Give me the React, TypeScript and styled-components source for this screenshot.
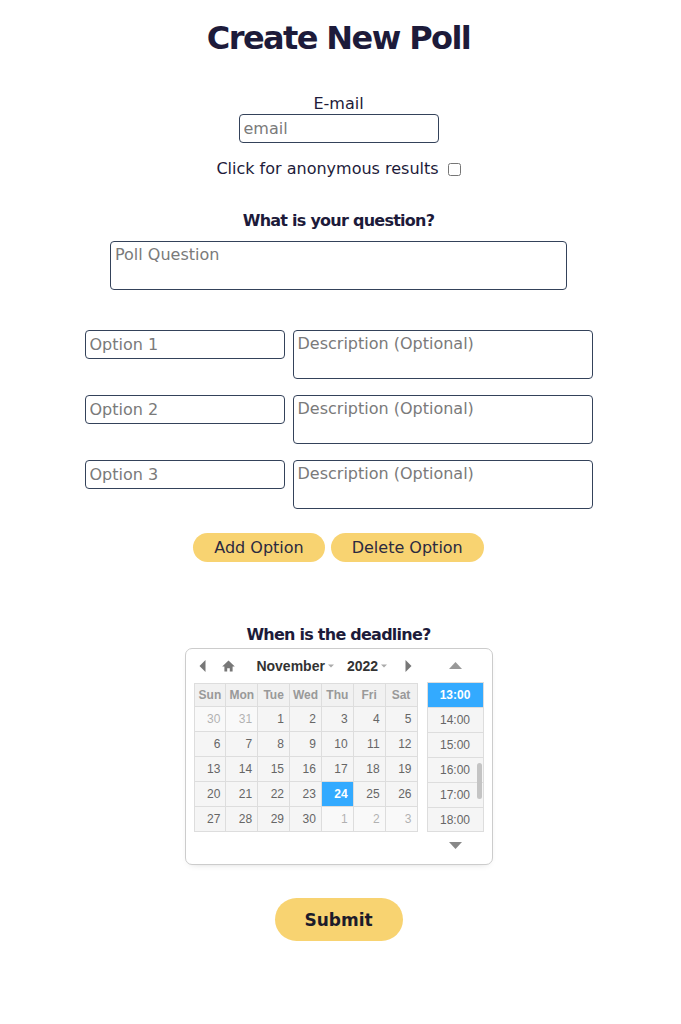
import React from "react";
import styled, { createGlobalStyle } from "styled-components";

const Global = createGlobalStyle`
  body {
    margin: 0;
    background: #ffffff;
    font-family: "DejaVu Sans", "Open Sans", sans-serif;
    color: #1d1b3a;
  }
  * { box-sizing: border-box; }
`;

const Page = styled.main`
  display: flex;
  flex-direction: column;
  align-items: center;
  padding: 18px 4px 60px 0;
`;

const Title = styled.h1`
  margin: 0;
  font-size: 32px;
  line-height: 40px;
  font-weight: 700;
  letter-spacing: -1.6px;
  color: #1d1b3a;
`;

const FieldLabel = styled.label<{ $top: number }>`
  margin-top: ${(p) => p.$top}px;
  font-size: 16px;
  line-height: 20px;
  color: #1d1b3a;
`;

const Heading = styled.h2<{ $top: number }>`
  margin: ${(p) => p.$top}px 0 0;
  font-size: 16px;
  line-height: 20px;
  font-weight: 700;
  letter-spacing: -0.75px;
  color: #1d1b3a;
`;

const fieldBase = `
  font-family: "DejaVu Sans", "Open Sans", sans-serif;
  font-size: 16px;
  line-height: 20px;
  color: #1d1b3a;
  border: 1px solid #34425a;
  border-radius: 4px;
  background: #fff;
  outline: none;
  &::placeholder { color: #7a7a7a; }
`;

const TextInput = styled.input<{ $w: number }>`
  ${fieldBase}
  width: ${(p) => p.$w}px;
  height: 29px;
  padding: 3px 4px;
`;

const TextArea = styled.textarea<{ $w: number }>`
  ${fieldBase}
  width: ${(p) => p.$w}px;
  height: 49px;
  padding: 3px 4px;
  resize: none;
  display: block;
`;

const CheckRow = styled.label`
  margin-top: 16px;
  display: flex;
  align-items: center;
  gap: 9px;
  font-size: 16px;
  line-height: 20px;
  color: #1d1b3a;
`;

const CheckBox = styled.input`
  width: 13px;
  height: 13px;
  margin: 0;
`;

const QuestionArea = styled(TextArea)`
  margin-top: 10px;
`;

const OptionList = styled.div`
  margin-top: 40px;
  display: flex;
  flex-direction: column;
  gap: 16px;
`;

const OptionRow = styled.div`
  display: flex;
  align-items: flex-start;
  gap: 8px;
`;

const ButtonRow = styled.div`
  margin-top: 24px;
  display: flex;
  gap: 6px;
`;

const PillButton = styled.button`
  height: 29px;
  padding: 0 21px;
  border: none;
  border-radius: 15px;
  background: #f8d371;
  font-family: "DejaVu Sans", "Open Sans", sans-serif;
  font-size: 16px;
  color: #2b2a40;
  cursor: pointer;
`;

const SubmitButton = styled.button`
  margin-top: 33px;
  width: 128px;
  height: 43px;
  border: none;
  border-radius: 22px;
  background: #f8d371;
  font-family: "DejaVu Sans", "Open Sans", sans-serif;
  font-size: 17px;
  font-weight: 700;
  color: #1d1b2a;
  cursor: pointer;
`;

/* ---------- date time picker ---------- */

const Picker = styled.div`
  margin-top: 3px;
  width: 308px;
  height: 217px;
  border: 1px solid #cccccc;
  border-radius: 7px;
  background: #fff;
  padding: 7px 8px 2px;
  display: flex;
  gap: 9px;
  font-family: "Liberation Sans", Arial, sans-serif;
  box-shadow: 0 3px 8px -6px rgba(0, 0, 0, 0.3);
`;

const CalendarCol = styled.div`
  display: flex;
  flex-direction: column;
  width: 224px;
`;

const NavBar = styled.div`
  height: 20px;
  margin-bottom: 7px;
  display: flex;
  align-items: center;
`;

const NavIcon = styled.span<{ $ml?: number }>`
  width: 20px;
  height: 20px;
  margin-left: ${(p) => p.$ml ?? 0}px;
  display: flex;
  align-items: center;
  justify-content: center;
`;

const NavSelect = styled.span<{ $ml: number }>`
  margin-left: ${(p) => p.$ml}px;
  display: flex;
  align-items: center;
  gap: 3px;
  font-size: 14px;
  font-weight: 700;
  color: #333;
`;

const CalTable = styled.table`
  width: 224px;
  border-collapse: collapse;
  table-layout: fixed;
`;

const HeadCell = styled.th`
  height: 23px;
  padding: 0;
  border: 1px solid #dddddd;
  background: #f1f1f1;
  color: #999999;
  font-size: 12px;
  font-weight: 700;
  text-align: center;
`;

const DayCell = styled.td<{ $other?: boolean; $current?: boolean }>`
  height: 25px;
  padding: 0 5px 0 0;
  border: 1px solid #dddddd;
  background: ${(p) => (p.$current ? "#33aaff" : "#f5f5f5")};
  color: ${(p) => (p.$current ? "#ffffff" : "#666666")};
  font-weight: ${(p) => (p.$current ? 700 : 400)};
  font-size: 12px;
  text-align: right;
  opacity: ${(p) => (p.$other ? 0.5 : 1)};
`;

const TimeCol = styled.div`
  width: 57px;
  display: flex;
  flex-direction: column;
`;

const ArrowBox = styled.div<{ $up?: boolean }>`
  height: 26px;
  display: flex;
  align-items: ${(p) => (p.$up ? "flex-start" : "center")};
  padding-top: ${(p) => (p.$up ? 6 : 0)}px;
  justify-content: center;
`;

const TimeList = styled.div`
  position: relative;
  height: 150px;
  border: 1px solid #dddddd;
  border-top: none;
  overflow: hidden;
  background: #f5f5f5;
`;

const TimeItem = styled.div<{ $current?: boolean }>`
  height: 25px;
  border-top: 1px solid #dddddd;
  display: flex;
  align-items: center;
  justify-content: center;
  font-size: 12px;
  background: ${(p) => (p.$current ? "#33aaff" : "#f5f5f5")};
  color: ${(p) => (p.$current ? "#ffffff" : "#666666")};
  font-weight: ${(p) => (p.$current ? 700 : 400)};
`;

const Scroller = styled.div`
  position: absolute;
  right: 1px;
  top: 81px;
  width: 5px;
  height: 36px;
  border-radius: 3px;
  background: #c4c4c4;
`;

const Caret = () => (
  <svg width="6" height="4" viewBox="0 0 6 4">
    <path d="M0 0.5 L6 0.5 L3 3.5 Z" fill="#aaaaaa" />
  </svg>
);

const days: number[][] = [
  [30, 31, 1, 2, 3, 4, 5],
  [6, 7, 8, 9, 10, 11, 12],
  [13, 14, 15, 16, 17, 18, 19],
  [20, 21, 22, 23, 24, 25, 26],
  [27, 28, 29, 30, 1, 2, 3],
];
const weekDays = ["Sun", "Mon", "Tue", "Wed", "Thu", "Fri", "Sat"];
const times = ["13:00", "14:00", "15:00", "16:00", "17:00", "18:00"];

function DateTimePicker() {
  return (
    <Picker>
      <CalendarCol>
        <NavBar>
          <NavIcon>
            <svg width="7" height="12" viewBox="0 0 7 12">
              <path d="M6.5 0 L0.5 6 L6.5 12 Z" fill="#777" />
            </svg>
          </NavIcon>
          <NavIcon $ml={9}>
            <svg width="13" height="12" viewBox="0 0 13 12">
              <path d="M6.5 0.5 L12.8 6.6 L10.6 6.6 L10.6 11.5 L7.8 11.5 L7.8 8.3 L5.2 8.3 L5.2 11.5 L2.4 11.5 L2.4 6.6 L0.2 6.6 Z" fill="#777" />
            </svg>
          </NavIcon>
          <NavSelect $ml={19}>
            November <Caret />
          </NavSelect>
          <NavSelect $ml={13}>
            2022 <Caret />
          </NavSelect>
          <NavIcon $ml={13}>
            <svg width="7" height="12" viewBox="0 0 7 12">
              <path d="M0.5 0 L6.5 6 L0.5 12 Z" fill="#777" />
            </svg>
          </NavIcon>
        </NavBar>
        <CalTable>
          <thead>
            <tr>
              {weekDays.map((d) => (
                <HeadCell key={d}>{d}</HeadCell>
              ))}
            </tr>
          </thead>
          <tbody>
            {days.map((row, ri) => (
              <tr key={ri}>
                {row.map((d, ci) => {
                  const other = (ri === 0 && d > 20) || (ri === 4 && d < 10);
                  return (
                    <DayCell key={ci} $other={other} $current={ri === 3 && d === 24}>
                      {d}
                    </DayCell>
                  );
                })}
              </tr>
            ))}
          </tbody>
        </CalTable>
      </CalendarCol>
      <TimeCol>
        <ArrowBox $up>
          <svg width="13" height="7" viewBox="0 0 13 7">
            <path d="M0 7 L6.5 0 L13 7 Z" fill="#999" />
          </svg>
        </ArrowBox>
        <TimeList>
          {times.map((t, i) => (
            <TimeItem key={t} $current={i === 0}>
              {t}
            </TimeItem>
          ))}
          <Scroller />
        </TimeList>
        <ArrowBox>
          <svg width="13" height="7" viewBox="0 0 13 7">
            <path d="M0 0 L13 0 L6.5 7 Z" fill="#888" />
          </svg>
        </ArrowBox>
      </TimeCol>
    </Picker>
  );
}

export default function App() {
  return (
    <>
      <Global />
      <Page>
        <Title>Create New Poll</Title>
        <FieldLabel $top={36} htmlFor="email">
          E-mail
        </FieldLabel>
        <TextInput id="email" $w={200} placeholder="email" />
        <CheckRow>
          Click for anonymous results
          <CheckBox type="checkbox" />
        </CheckRow>
        <Heading $top={32}>What is your question?</Heading>
        <QuestionArea $w={457} placeholder="Poll Question" />
        <OptionList>
          {[1, 2, 3].map((n) => (
            <OptionRow key={n}>
              <TextInput $w={200} placeholder={`Option ${n}`} />
              <TextArea $w={300} placeholder="Description (Optional)" />
            </OptionRow>
          ))}
        </OptionList>
        <ButtonRow>
          <PillButton>Add Option</PillButton>
          <PillButton>Delete Option</PillButton>
        </ButtonRow>
        <Heading $top={63}>When is the deadline?</Heading>
        <DateTimePicker />
        <SubmitButton>Submit</SubmitButton>
      </Page>
    </>
  );
}
